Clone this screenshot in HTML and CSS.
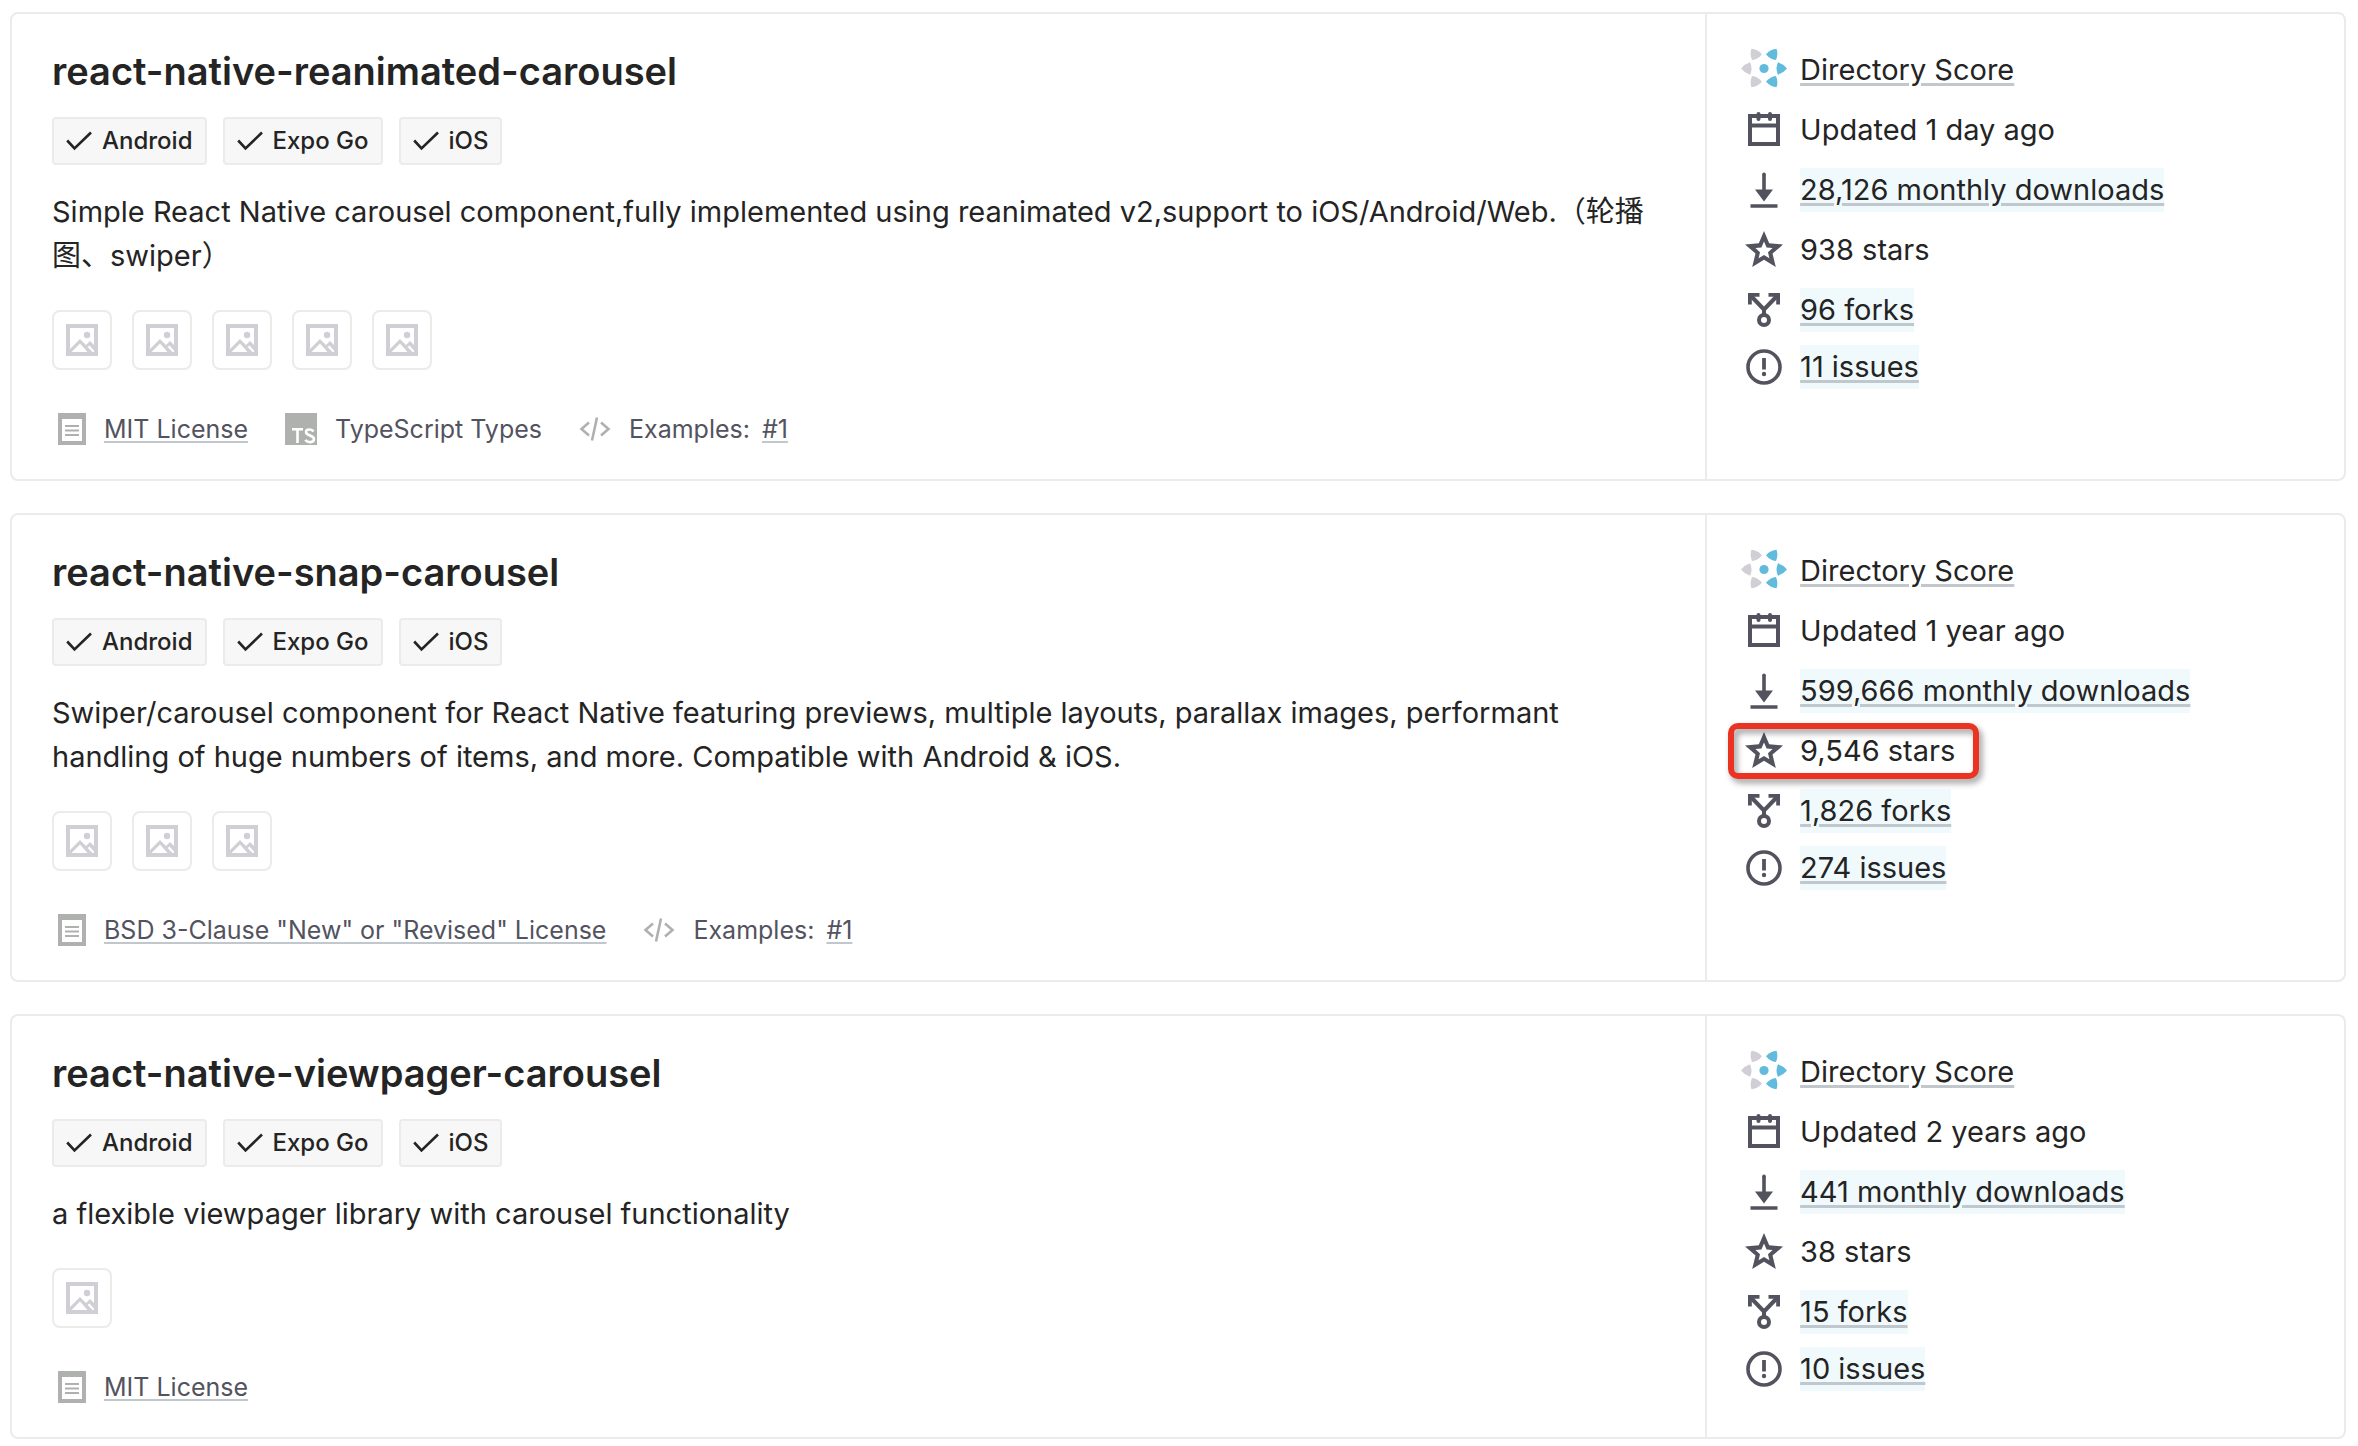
FILE: index.html
```html
<!DOCTYPE html>
<html lang="en">
<head>
<meta charset="utf-8">
<title>React Native Directory</title>
<link rel="stylesheet" href="styles.css">
</head>
<body>
<svg class="sprite" aria-hidden="true">
  <symbol id="check" viewBox="0 0 26 20"><path d="M1.200 9.500l7.300 8L25 1.500" fill="none" stroke="currentColor" stroke-width="2.600"/></symbol>
  <symbol id="image" viewBox="0 0 32 32"><path fill="currentColor" fill-rule="evenodd" d="M0 0h32v32H0zM4 4v21l10-10 6 6 4-4 4 4V4zM14 19.500l-8.500 8.500H21.500zM21.500 23l5 5H28v-1.500L23.500 21.500z"/><circle cx="21" cy="11" r="3.200" fill="currentColor"/></symbol>
  <symbol id="license" viewBox="0 0 28 32"><path fill="currentColor" fill-rule="evenodd" d="M0 0h28v32H0zM4 6v22h20V6z"/><path d="M7 13h14M7 17.500h14M7 22h14" stroke="currentColor" stroke-width="1.800"/></symbol>
  <symbol id="ts" viewBox="0 0 32 32"><path fill="currentColor" d="M0 0h32v32H0z"/><path d="M7 16.200h11M12.500 16v14M28.500 18.500c-1.500-2.500-7.500-3-7.500.500 0 4 8 3 8 7 0 4-7 4-8.500.800" fill="none" stroke="#fff" stroke-width="2.600"/></symbol>
  <symbol id="code" viewBox="0 0 32 24"><path d="M10 5.500L2.500 12l7.500 6.500M22 5.500l7.500 6.500-7.500 6.500M18 .500L13 23.500" fill="none" stroke="currentColor" stroke-width="2.600"/></symbol>
  <symbol id="score" viewBox="0 0 46 44">
    <g fill="#cfcfd5"><path d="M0 20.500Q3.500 16 9 14.200 12 20.500 9 26.800 3.500 25 0 20.500z"/><path d="M10.500.800Q16 1 21 6.200 17 11.500 11 12 8.500 5.500 10.500.800z"/><path d="M10.500 39.200Q16 39 21 33.800 17 28.500 11 28 8.500 34.500 10.500 39.200z"/></g>
    <g fill="#61bbdc"><path d="M46 20.500Q42.500 16 37 14.200 34 20.500 37 26.800 42.500 25 46 20.500z"/><path d="M35.500.800Q30 1 25 6.200 29 11.500 35 12 37.500 5.500 35.500.800z"/><path d="M35.500 39.200Q30 39 25 33.800 29 28.500 35 28 37.500 34.500 35.500 39.200z"/><circle cx="23" cy="20.500" r="4.600"/></g>
  </symbol>
  <symbol id="calendar" viewBox="0 0 32 36"><path d="M2 4h28v28H2zM2 13.500h28" fill="none" stroke="currentColor" stroke-width="4"/><path d="M10.500 2v5M22 2v5" stroke="currentColor" stroke-width="4" stroke-linecap="round"/></symbol>
  <symbol id="download" viewBox="0 0 28 36"><path d="M14 2.500V20M.500 34h27" fill="none" stroke="currentColor" stroke-width="3.600"/><circle cx="14" cy="2.300" r="1.800" fill="currentColor"/><path d="M5 17.500h18l-9 12z" fill="currentColor"/></symbol>
  <symbol id="star" viewBox="0 0 38 38"><path fill="currentColor" fill-rule="evenodd" d="M19 0l5.200 12.200L38 13.600 27.500 22.600 30.800 36 19 28.800 7.200 36l3.300-13.400L0 13.600l13.800-1.400zM19 10.500l-2.600 6-6 .600 4.600 4.200L13.600 27.300 19 24l5.400 3.300-1.400-6 4.600-4.200-6-.600z"/></symbol>
  <symbol id="fork" viewBox="0 0 32 34"><path d="M3 3l13 13.500L29 3M16 16v6" fill="none" stroke="currentColor" stroke-width="4"/><path d="M0 0h11.500v3.800H3.800V11.500H0zM32 0H20.500v3.800h7.700V11.500H32z" fill="currentColor"/><circle cx="16" cy="27" r="5" fill="none" stroke="currentColor" stroke-width="4"/></symbol>
  <symbol id="issue" viewBox="0 0 36 36"><circle cx="18" cy="18" r="16" fill="none" stroke="currentColor" stroke-width="3.600"/><path d="M18 9v11.500" stroke="currentColor" stroke-width="3.800"/><circle cx="18" cy="25" r="2.200" fill="currentColor"/></symbol>
</svg>
<main class="list">
  <article class="card">
    <div class="main">
      <h2 class="name"><a href="#">react-native-reanimated-carousel</a></h2>
      <ul class="badges">
        <li><svg><use href="#check"/></svg>Android</li>
        <li><svg><use href="#check"/></svg>Expo Go</li>
        <li><svg><use href="#check"/></svg>iOS</li>
      </ul>
      <p class="description">Simple React Native carousel component,fully implemented using reanimated v2,support to iOS/Android/Web.（轮播图、swiper）</p>
      <div class="thumbs">
        <button aria-label="Preview 1"><svg><use href="#image"/></svg></button>
        <button aria-label="Preview 2"><svg><use href="#image"/></svg></button>
        <button aria-label="Preview 3"><svg><use href="#image"/></svg></button>
        <button aria-label="Preview 4"><svg><use href="#image"/></svg></button>
        <button aria-label="Preview 5"><svg><use href="#image"/></svg></button>
      </div>
      <ul class="meta">
        <li><svg class="license"><use href="#license"/></svg><a href="#">MIT License</a></li>
        <li><svg class="ts"><use href="#ts"/></svg>TypeScript Types</li>
        <li><svg class="code"><use href="#code"/></svg>Examples: <a class="example" href="#">#1</a></li>
      </ul>
    </div>
    <ul class="stats">
      <li><svg class="score"><use href="#score"/></svg><a href="#">Directory Score</a></li>
      <li><svg class="calendar"><use href="#calendar"/></svg><span>Updated 1 day ago</span></li>
      <li><svg class="download"><use href="#download"/></svg><a class="tinted" href="#">28,126 monthly downloads</a></li>
      <li><svg class="star"><use href="#star"/></svg><span>938 stars</span></li>
      <li><svg class="fork"><use href="#fork"/></svg><a class="tinted" href="#">96 forks</a></li>
      <li><svg class="issue"><use href="#issue"/></svg><a class="tinted" href="#">11 issues</a></li>
    </ul>
  </article>
  <article class="card">
    <div class="main">
      <h2 class="name"><a href="#">react-native-snap-carousel</a></h2>
      <ul class="badges">
        <li><svg><use href="#check"/></svg>Android</li>
        <li><svg><use href="#check"/></svg>Expo Go</li>
        <li><svg><use href="#check"/></svg>iOS</li>
      </ul>
      <p class="description">Swiper/carousel component for React Native featuring previews, multiple layouts, parallax images, performant handling of huge numbers of items, and more. Compatible with Android &amp; iOS.</p>
      <div class="thumbs">
        <button aria-label="Preview 1"><svg><use href="#image"/></svg></button>
        <button aria-label="Preview 2"><svg><use href="#image"/></svg></button>
        <button aria-label="Preview 3"><svg><use href="#image"/></svg></button>
      </div>
      <ul class="meta">
        <li><svg class="license"><use href="#license"/></svg><a href="#">BSD 3-Clause "New" or "Revised" License</a></li>
        <li><svg class="code"><use href="#code"/></svg>Examples: <a class="example" href="#">#1</a></li>
      </ul>
    </div>
    <ul class="stats">
      <li><svg class="score"><use href="#score"/></svg><a href="#">Directory Score</a></li>
      <li><svg class="calendar"><use href="#calendar"/></svg><span>Updated 1 year ago</span></li>
      <li><svg class="download"><use href="#download"/></svg><a class="tinted" href="#">599,666 monthly downloads</a></li>
      <li class="marked"><svg class="star"><use href="#star"/></svg><span>9,546 stars</span></li>
      <li><svg class="fork"><use href="#fork"/></svg><a class="tinted" href="#">1,826 forks</a></li>
      <li><svg class="issue"><use href="#issue"/></svg><a class="tinted" href="#">274 issues</a></li>
    </ul>
  </article>
  <article class="card">
    <div class="main">
      <h2 class="name"><a href="#">react-native-viewpager-carousel</a></h2>
      <ul class="badges">
        <li><svg><use href="#check"/></svg>Android</li>
        <li><svg><use href="#check"/></svg>Expo Go</li>
        <li><svg><use href="#check"/></svg>iOS</li>
      </ul>
      <p class="description">a flexible viewpager library with carousel functionality</p>
      <div class="thumbs">
        <button aria-label="Preview 1"><svg><use href="#image"/></svg></button>
      </div>
      <ul class="meta">
        <li><svg class="license"><use href="#license"/></svg><a href="#">MIT License</a></li>
      </ul>
    </div>
    <ul class="stats">
      <li><svg class="score"><use href="#score"/></svg><a href="#">Directory Score</a></li>
      <li><svg class="calendar"><use href="#calendar"/></svg><span>Updated 2 years ago</span></li>
      <li><svg class="download"><use href="#download"/></svg><a class="tinted" href="#">441 monthly downloads</a></li>
      <li><svg class="star"><use href="#star"/></svg><span>38 stars</span></li>
      <li><svg class="fork"><use href="#fork"/></svg><a class="tinted" href="#">15 forks</a></li>
      <li><svg class="issue"><use href="#issue"/></svg><a class="tinted" href="#">10 issues</a></li>
    </ul>
  </article>
</main>
</body>
</html>
```
FILE: styles.css
```css
* { box-sizing: border-box; }
body {
  margin: 0;
  background: #fff;
  color: #242424;
  font-family: Inter, "Noto Sans CJK SC", sans-serif;
  font-size: 29px;
  line-height: 44px;
}
ul, h2, p { margin: 0; padding: 0; }
ul { list-style: none; }
svg { display: block; flex: none; }
a {
  color: inherit;
  text-decoration: underline;
  text-decoration-color: #c0c8cd;
  text-decoration-thickness: 3px;
  text-underline-offset: 3px;
}
.sprite { position: absolute; width: 0; height: 0; }
.list {
  display: flex;
  flex-direction: column;
  gap: 32px;
  padding: 12px 12px 6px 10px;
}
.card {
  display: grid;
  grid-template-columns: 53fr 20fr;
  border: 2px solid #ebebeb;
  border-radius: 8px;
}
.main {
  min-width: 0;
  padding: 34px 40px 28px;
}
.name {
  font-size: 38px;
  font-weight: 600;
  line-height: 46px;
}
.name a { text-decoration: none; }
.badges {
  display: flex;
  gap: 16px;
  margin: 23px 0 25px;
}
.badges li {
  display: flex;
  align-items: center;
  gap: 10px;
  height: 48px;
  padding: 0 12px;
  border: 2px solid #ebebeb;
  border-radius: 4px;
  background: #f7f7f7;
  font-size: 24px;
  font-weight: 500;
}
.badges svg { width: 26px; height: 20px; }
.thumbs {
  display: flex;
  gap: 20px;
  margin: 32px 0 37px;
}
.thumbs button {
  display: grid;
  place-items: center;
  width: 60px;
  height: 60px;
  padding: 0;
  border: 2px solid #ebebeb;
  border-radius: 8px;
  background: none;
  color: #cfcfd5;
}
.thumbs svg { width: 32px; height: 32px; }
.meta {
  display: flex;
  gap: 37px;
  color: #53535f;
  font-size: 25px;
}
.meta li { display: flex; align-items: center; }
.meta a { text-decoration-thickness: 2px; }
.meta svg { color: #afb1af; margin-right: 18px; }
.meta .example { margin-left: 12px; }
.license { width: 28px; height: 32px; margin-left: 6px; }
.ts { width: 32px; height: 32px; }
.code { width: 32px; height: 24px; }
.stats {
  border-left: 2px solid #ebebeb;
  padding: 26px 33px;
}
.stats li {
  display: grid;
  grid-template-columns: 48px auto;
  justify-content: start;
  align-items: center;
  gap: 12px;
  height: 60px;
}
.stats li:last-child { height: 54px; }
.stats svg { justify-self: center; color: #53535f; }
.tinted { background: #f0f9fc; }
.score { width: 46px; height: 44px; }
.calendar { width: 32px; height: 36px; }
.download { width: 28px; height: 36px; }
.star { width: 38px; height: 38px; }
.fork { width: 32px; height: 34px; }
.issue { width: 36px; height: 36px; }
.marked { position: relative; width: max-content; }
.marked::after {
  content: "";
  position: absolute;
  inset: 2px -24px 2px -12px;
  border: 6px solid #ea3323;
  border-radius: 10px;
  filter: drop-shadow(3px 4px 3px rgba(0, 0, 0, .4));
}
```
